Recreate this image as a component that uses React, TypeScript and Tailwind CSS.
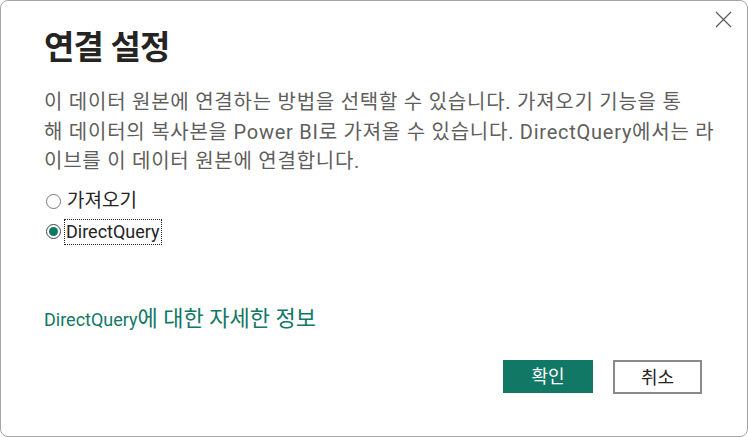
const font = "font-['Roboto','Noto_Sans_CJK_KR',sans-serif]";

export default function App() {
  return (
    <div className={`w-[748px] h-[437px] bg-white ${font}`}>
      <div className="relative w-[748px] h-[437px] rounded-[8px] border border-[#a6a6a6] bg-white pl-[43px] pr-[44px]">
        <button className="absolute right-[15px] top-[9px] w-[18px] h-[18px] flex items-center justify-center">
          <svg width="17" height="17" viewBox="0 0 17 17" stroke="#5a5a5a" strokeWidth="1.2">
            <path d="M1 1L16 16M16 1L1 16" />
          </svg>
        </button>

        <h1 className="pt-[27px] text-[33px] leading-[40px] font-bold text-[#252423] tracking-[-0.8px]">연결 설정</h1>

        <p className="mt-[20px] text-[20px] leading-[29.5px] text-[#605e5c] tracking-[0.75px] whitespace-nowrap">
          이 데이터 원본에 연결하는 방법을 선택할 수 있습니다. 가져오기 기능을 통<br />
          해 데이터의 복사본을 Power BI로 가져올 수 있습니다. DirectQuery에서는 라<br />
          이브를 이 데이터 원본에 연결합니다.
        </p>

        <div className="mt-[12px] flex flex-col gap-[4px] text-[19px] text-[#252423]">
          <label className="flex items-center h-[26px]">
            <span className="ml-[2px] w-[15px] h-[15px] rounded-full border-[1.5px] border-[#777] bg-white" />
            <span className="ml-[5px] px-[1px]">가져오기</span>
          </label>
          <label className="flex items-center h-[26px]">
            <span className="ml-[2px] w-[15px] h-[15px] rounded-full border-[1.5px] border-[#3a4a46] bg-white flex items-center justify-center">
              <span className="w-[9px] h-[9px] rounded-full bg-[#117865]" />
            </span>
            <span className="ml-[3px] px-[1px] border border-dotted border-[#222] leading-[24px] text-[18px]">DirectQuery</span>
          </label>
        </div>

        <a className="block mt-[61px] text-[22px] leading-[26px] text-[#117865]">
          <span className="text-[18px]">DirectQuery</span>에 대한 자세한 정보
        </a>

        <div className="absolute left-0 right-0 top-[359px] flex justify-end gap-[20px] pr-[45px]">
          <button className="w-[90px] h-[33px] bg-[#117865] text-white text-[18px]">확인</button>
          <button className="w-[89px] h-[34px] border-2 border-[#8a8a8a] bg-white text-[#252423] text-[18px]">취소</button>
        </div>
      </div>
    </div>
  );
}
